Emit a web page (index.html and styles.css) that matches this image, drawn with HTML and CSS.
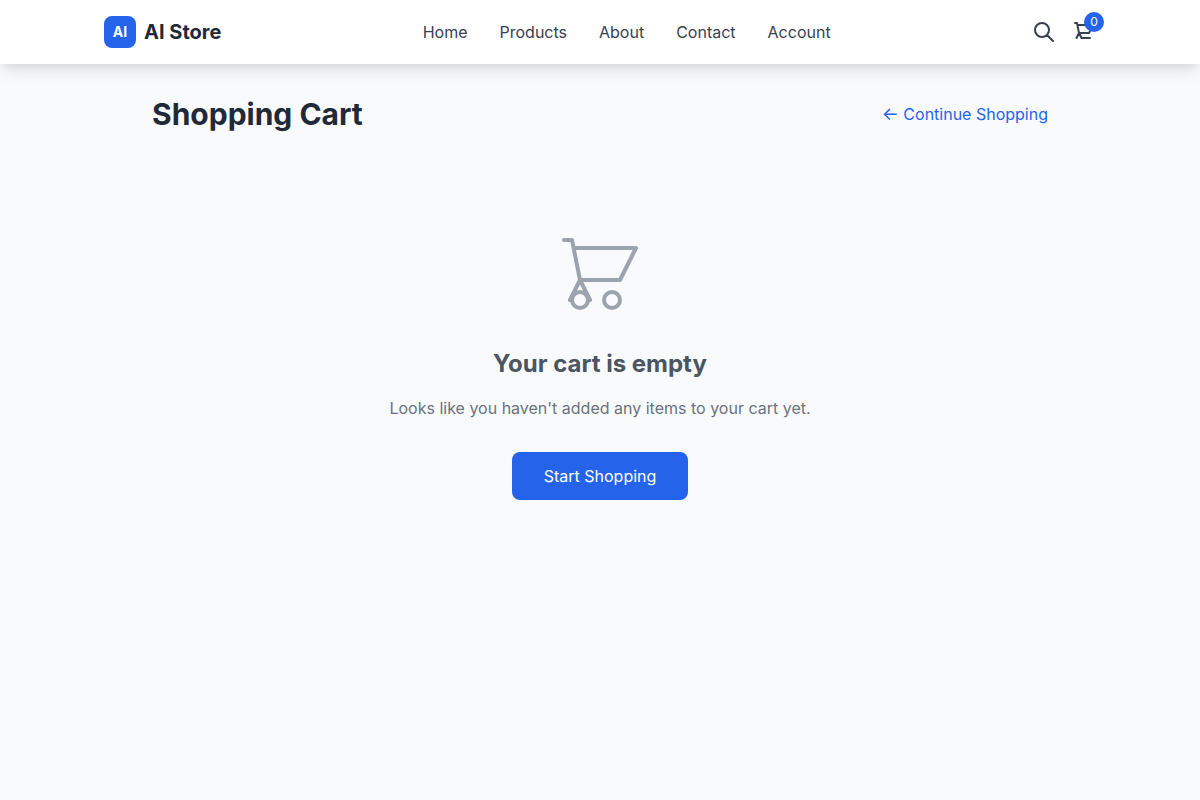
FILE: index.html
```html
<!DOCTYPE html>
<html lang="en">
<head>
<meta charset="utf-8">
<meta name="viewport" content="width=device-width, initial-scale=1">
<title>Shopping Cart - AI Store</title>
<link rel="stylesheet" href="styles.css">
</head>
<body>
<header class="site-header">
  <div class="header-inner">
    <a class="brand" href="#"><span class="brand-mark">AI</span><span class="brand-name">AI Store</span></a>
    <nav class="main-nav" aria-label="Main">
      <a href="#">Home</a>
      <a href="#">Products</a>
      <a href="#">About</a>
      <a href="#">Contact</a>
      <a href="#">Account</a>
    </nav>
    <div class="actions">
      <button class="icon-button" type="button" aria-label="Search">
        <svg class="icon" viewBox="0 0 24 24"><path d="M21 21l-6-6m2-5a7 7 0 11-14 0 7 7 0 0114 0z"/></svg>
      </button>
      <a class="icon-button" href="#" aria-label="Cart">
        <svg class="icon" viewBox="0 0 24 24"><path d="M3 3h2l.4 2M7 13h10l4-8H5.4M7 13L5.4 5M7 13l-2.5 5M7 13l2.5 5M9.5 18H18"/></svg>
        <span class="badge">0</span>
      </a>
    </div>
  </div>
</header>
<main class="cart-page">
  <div class="page-head">
    <h1 class="page-title">Shopping Cart</h1>
    <a class="back-link" href="#"><span class="back-arrow">←</span> Continue Shopping</a>
  </div>
  <section class="empty-cart">
    <svg class="empty-icon" viewBox="0 0 24 24" aria-hidden="true"><path d="M3 3h2l.4 2M7 13h10l4-8H5.4M7 13L5.4 5M7 13l-2.5 5M7 13l2.5 5M9 18a2 2 0 11-4 0 2 2 0 014 0zM17 18a2 2 0 11-4 0 2 2 0 014 0z"/></svg>
    <h2 class="empty-title">Your cart is empty</h2>
    <p class="empty-text">Looks like you haven't added any items to your cart yet.</p>
    <a class="start-button" href="#">Start Shopping</a>
  </section>
</main>
</body>
</html>
```
FILE: styles.css
```css
* { box-sizing: border-box; margin: 0; padding: 0; }
body {
  min-height: 100vh;
  background: #f9fafb;
  color: #1f2937;
  font-family: Inter, "Liberation Sans", sans-serif;
  font-size: 16px;
  line-height: 24px;
}
a { color: inherit; text-decoration: none; }
svg { display: block; fill: none; stroke: currentColor; stroke-linecap: round; stroke-linejoin: round; }

.site-header {
  position: relative;
  background: #fff;
  box-shadow: 0 10px 15px -3px rgba(0, 0, 0, 0.1), 0 4px 6px -2px rgba(0, 0, 0, 0.05);
}
.header-inner {
  display: flex;
  align-items: center;
  justify-content: space-between;
  max-width: 1024px;
  margin: 0 auto;
  padding: 16px;
}
.brand { display: flex; align-items: center; gap: 8px; }
.brand-mark {
  display: flex;
  align-items: center;
  justify-content: center;
  width: 32px;
  height: 32px;
  border-radius: 8px;
  background: #2563eb;
  color: #fff;
  font-size: 14px;
  font-weight: 700;
}
.brand-name { font-size: 20px; font-weight: 700; }
.main-nav { display: flex; gap: 32px; color: #374151; }
.actions { display: flex; align-items: center; gap: 16px; color: #374151; }
.icon-button { position: relative; display: block; border: 0; background: none; color: inherit; cursor: pointer; }
.icon { width: 24px; height: 24px; stroke-width: 2; }
.badge {
  position: absolute;
  top: -8px;
  right: -8px;
  width: 20px;
  height: 20px;
  border-radius: 50%;
  background: #2563eb;
  color: #fff;
  font-size: 12px;
  line-height: 20px;
  text-align: center;
}

.cart-page { max-width: 928px; margin: 0 auto; padding: 32px 16px; }
.page-head { display: flex; align-items: center; justify-content: space-between; margin-bottom: 32px; }
.page-title { font-size: 30px; line-height: 36px; font-weight: 700; }
.back-link { color: #2563eb; }
.back-arrow { font-size: 18px; line-height: 1; }

.empty-cart { display: flex; flex-direction: column; align-items: center; padding: 64px 0; text-align: center; }
.empty-icon { width: 96px; height: 96px; margin-bottom: 24px; color: #9ca3af; stroke-width: 1; }
.empty-title { margin-bottom: 16px; color: #4b5563; font-size: 24px; line-height: 32px; font-weight: 700; }
.empty-text { margin-bottom: 32px; color: #6b7280; }
.start-button { padding: 12px 32px; border-radius: 8px; background: #2563eb; color: #fff; }
```
